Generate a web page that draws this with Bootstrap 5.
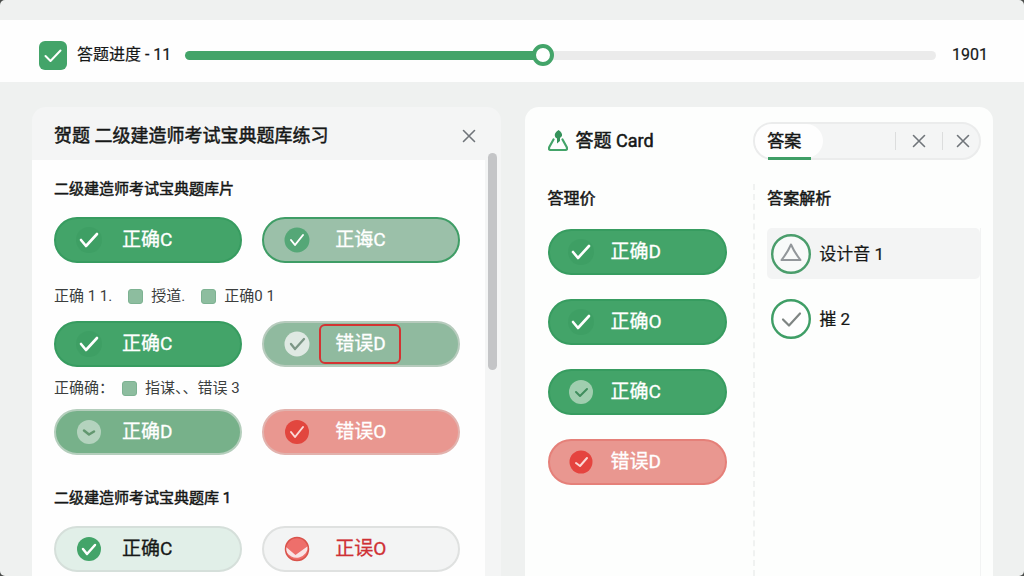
<!DOCTYPE html>
<html lang="zh-CN">
<head>
<meta charset="utf-8">
<meta name="viewport" content="width=device-width, initial-scale=1">
<title>二级建造师考试宝典题库练习</title>
<link href="https://cdn.jsdelivr.net/npm/bootstrap@5.3.0/dist/css/bootstrap.min.css" rel="stylesheet">
<style>
  :root { --green: #43a469; --ink: #161817; }
  html { background: #4a4d4b; }
  body { background: transparent; color: var(--ink); font-family: Roboto, "Noto Sans CJK SC", sans-serif; font-size: 15px; line-height: 22px; }
  .app { height: 100vh; overflow: hidden; background: #eff1f0; border-radius: 5px; padding-top: 20px; }
  .topbar { background: #fefefe; min-height: 62px; padding: 8px 36px 0 39px; }
  .topbar label { font-size: 16px; margin: 0 14px 0 10px; -webkit-text-stroke: 0.2px; }
  .topbar output { font-size: 16px; margin-left: 16px; -webkit-text-stroke: 0.2px; }
  .quiz-range { height: 24px; min-width: 0; }
  .quiz-range::-webkit-slider-runnable-track { height: 9px; border-radius: 5px; background: linear-gradient(90deg, var(--green) 48%, #ebebeb 48%); }
  .quiz-range::-webkit-slider-thumb { width: 22px; height: 22px; margin-top: -7px; background: #fff; border: 4px solid var(--green); box-shadow: none; }
  .panels { display: grid; grid-template-columns: minmax(0, 1fr) minmax(0, 1fr); padding: 25px 31px 0 32px; gap: 24px; min-height: 0; }
  .panel { min-width: 0; border-radius: 14px 14px 0 0; overflow: hidden; }
  .practice { background: #f4f5f5; }
  .practice-head { height: 53px; padding: 4px 0 0 22px; }
  h1, h2, h3 { margin: 0; color: var(--ink); font-weight: 400; -webkit-text-stroke: 0.5px; }
  h1, .sheet .card-name { font-size: 18px; line-height: 26px; }
  h3 { font-size: 15px; line-height: 22px; }
  .close-x { border: 0; background: none; padding: 0; width: 32px; height: 32px; color: #70757a; display: grid; place-items: center; }
  .questions { background: #fefefe; padding: 18px 24px 0 22px; }
  .answers { display: grid; grid-template-columns: 188fr 198fr; gap: 20px; }
  .questions h3 + .answers { margin-top: 17px; }
  .legend-line { color: #3c3f3e; line-height: 22px; white-space: pre; margin: 10px 0; }
  .legend-first { margin: 22px 0 14px; }
  .swatch { width: 15px; height: 15px; border-radius: 3px; background: #8dbd9f; border: 1px solid #7db292; }
  .rail { width: 16px; padding-top: 46px; }
  .rail-thumb { width: 9px; height: 217px; border-radius: 5px; background: #c4c5c7; margin-left: 3px; }
  .pill { height: 46px; border-radius: 23px; border: 2px solid #379c60; background: var(--green); color: #fff; font-size: 19px; line-height: 26px; padding: 0 0 0 20px; display: flex; align-items: center; width: 100%; -webkit-text-stroke: 0.3px; }
  .pill svg { width: 26px; height: 26px; flex: none; margin-right: 20px; }
  .answers .pill:nth-child(even) svg { margin-right: 25px; }
  .pill-dim { background: #9bc0a9; border-color: #3f9d66; }
  .pill-sage { background: #90ba9f; border-color: #b7cbbd; }
  .pill-mid { background: #77b18a; border-color: #b4cebc; }
  .pill-red { background: #e99790; border-color: #e2b2ad; }
  .pill-card-red { background: #e99790; border-color: #e58079; }
  .pill-mint { background: #e1efe8; border-color: #d5dfda; color: var(--ink); }
  .pill-plain { background: #f3f4f4; border-color: #dfe1e0; color: #cf3034; }
  .flag { border: 2px solid #d33332; border-radius: 6px; padding: 5px 13px 5px 14px; margin-left: -16px; }
  .sheet { background: #fdfefd; padding: 15px 12px 0 23px; }
  .split { display: grid; grid-template-columns: minmax(0, 206fr) minmax(0, 228fr); }
  .tabs-box { height: 38px; border: 2px solid #ebecec; border-radius: 19px; background: #f4f5f5; }
  .tab-on { position: relative; height: 34px; width: 68px; border: 0; border-radius: 17px; background: #fefefe; padding: 0 0 0 12px; text-align: left; font-size: 17px; color: var(--ink); -webkit-text-stroke: 0.5px; }
  .tab-on::after { content: ""; position: absolute; left: 13px; bottom: -2px; width: 43px; height: 3px; background: #3f9e66; }
  .bar-sep { width: 1px; height: 18px; background: #dcdddd; }
  .sheet h2 { font-size: 16px; line-height: 22px; }
  .sheet-pills { padding-right: 26px; gap: 24px; margin-top: 19px; }
  .sheet-pills .pill { padding-left: 18px; }
  .sheet-pills .pill svg { margin-right: 17px; }
  .analysis { border-left: 2px dashed #f0f2f1; padding: 4px 0 0 12px; }
  .entries { border-right: 1px solid #f2f3f3; margin-top: 18px; gap: 14px; }
  .entry { border: 0; background: none; height: 51px; padding: 0 0 0 4px; gap: 8px; font-size: 17px; color: var(--ink); text-align: left; border-radius: 5px; -webkit-text-stroke: 0.2px; }
  .entry svg { width: 40px; height: 40px; flex: none; }
  .entry-on { background: #f3f4f4; }
</style>
</head>
<body>
<svg class="d-none" aria-hidden="true">
  <symbol id="tick" viewBox="0 0 26 26"><circle cx="13" cy="13" r="13" fill="#3b9b61" opacity=".55"/><path d="M5 13l5 6L21 7" fill="none" stroke="#fff" stroke-width="2.600" stroke-linecap="round" stroke-linejoin="round"/></symbol>
  <symbol id="x" viewBox="0 0 14 14"><path d="M1.500 1.500l11 11M12.500 1.500l-11 11" fill="none" stroke="currentColor" stroke-width="1.600" stroke-linecap="round"/></symbol>
</svg>
<div class="app d-flex flex-column">
  <header class="topbar d-flex align-items-center">
    <svg class="flex-shrink-0" width="28" height="29" viewBox="0 0 28 29"><rect width="28" height="29" rx="6" fill="#43a469"/><path d="M6.500 15l5 5L21.500 9.500" fill="none" stroke="#fff" stroke-width="2" stroke-linecap="round" stroke-linejoin="round"/></svg>
    <label for="progress" class="text-nowrap">答题进度 - 11</label>
    <input type="range" class="form-range quiz-range flex-fill" id="progress" min="0" max="1000" value="476">
    <output for="progress">1901</output>
  </header>

  <main class="panels flex-fill">
    <section class="panel practice d-flex">
      <div class="flex-fill d-flex flex-column">
        <div class="practice-head d-flex align-items-center justify-content-between">
          <h1>贺题 二级建造师考试宝典题库练习</h1>
          <button class="close-x" type="button" aria-label="关闭"><svg width="14" height="14"><use href="#x"/></svg></button>
        </div>
        <div class="questions flex-fill">
          <h3>二级建造师考试宝典题库片</h3>
          <div class="answers">
            <button type="button" class="pill"><svg><use href="#tick"/></svg>正确C</button>
            <button type="button" class="pill pill-dim"><svg viewBox="0 0 26 26"><circle cx="13" cy="13" r="12.500" fill="#55a777"/><path d="M7 13l4 5 8-10" fill="none" stroke="#fff" stroke-width="2" stroke-linecap="round" stroke-linejoin="round"/></svg>正诲C</button>
          </div>
          <div class="legend-line legend-first d-flex align-items-center"><span>正确 1 1.</span><span class="swatch ms-3 me-2"></span><span>授道.</span><span class="swatch ms-3 me-2"></span><span>正确0 1</span></div>
          <div class="answers">
            <button type="button" class="pill"><svg><use href="#tick"/></svg>正确C</button>
            <button type="button" class="pill pill-sage"><svg viewBox="0 0 26 26"><circle cx="13" cy="13" r="12.500" fill="#dfe9e3"/><path d="M7 13l4 5 9-10" fill="none" stroke="#7c9686" stroke-width="2.300" stroke-linecap="round" stroke-linejoin="round"/></svg><span class="flag">错误D</span></button>
          </div>
          <div class="legend-line d-flex align-items-center"><span>正确确：</span><span class="swatch ms-2 me-2"></span><span>指谋、、错误 3</span></div>
          <div class="answers">
            <button type="button" class="pill pill-mid"><svg viewBox="0 0 26 26"><circle cx="13" cy="13" r="12" fill="#b4d3be"/><path d="M8 11.500l5 4 5-3" fill="none" stroke="#62976f" stroke-width="2.500" stroke-linecap="round" stroke-linejoin="round"/></svg>正确D</button>
            <button type="button" class="pill pill-red"><svg viewBox="0 0 26 26"><circle cx="13" cy="13" r="12" fill="#e2463e"/><path d="M7 13l4 5 8-10" fill="none" stroke="#fbd9d6" stroke-width="2" stroke-linecap="round" stroke-linejoin="round"/></svg>错误O</button>
          </div>
          <h3 class="pt-3 mt-3">二级建造师考试宝典题库 1</h3>
          <div class="answers">
            <button type="button" class="pill pill-mint"><svg viewBox="0 0 26 26"><circle cx="13" cy="13" r="12" fill="#43a469"/><path d="M7 13l4 5 8-9" fill="none" stroke="#fff" stroke-width="2.500" stroke-linecap="round" stroke-linejoin="round"/></svg>正确C</button>
            <button type="button" class="pill pill-plain"><svg viewBox="0 0 26 26"><circle cx="13" cy="13" r="11.500" fill="#ee6f6b"/><path d="M2 11L11.500 19 24 10A11.500 11.500 0 0 1 2 15z" fill="#f9e4e5"/><circle cx="13" cy="13" r="11.500" fill="none" stroke="#d9534b" stroke-width="1.500"/></svg>正误O</button>
          </div>
        </div>
      </div>
      <div class="rail flex-shrink-0"><div class="rail-thumb"></div></div>
    </section>

    <section class="panel sheet d-flex flex-column">
      <div class="split align-items-center">
        <div class="d-flex align-items-center">
          <svg class="me-2" width="20" height="22" viewBox="0 0 20 22"><path d="M5.500 9.500L1.300 17q-1 3 1.200 3h15q2.200 0 1.200-3l-4.200-7.500" fill="none" stroke="#43a469" stroke-width="2.200" stroke-linejoin="round" stroke-linecap="round"/><path d="M10.500 0C7 2.500 6 4.500 7.500 7.500L9 8.500v5l3-2.500V8l2-2C14.500 3.500 13 1.500 10.500 0z" fill="#35925a"/></svg>
          <h2 class="card-name">答题 Card</h2>
        </div>
        <div class="tabs-box d-flex align-items-center">
          <button type="button" class="tab-on me-auto">答案</button>
          <span class="bar-sep me-2"></span>
          <button class="close-x w-auto px-2" type="button" aria-label="收起"><svg width="14" height="14"><use href="#x"/></svg></button>
          <span class="bar-sep ms-2 me-1"></span>
          <button class="close-x" type="button" aria-label="关闭"><svg width="14" height="14"><use href="#x"/></svg></button>
        </div>
      </div>
      <div class="split flex-fill pt-4">
        <div>
          <h2 class="pt-1">答理价</h2>
          <div class="sheet-pills d-flex flex-column">
            <button type="button" class="pill"><svg><use href="#tick"/></svg>正确D</button>
            <button type="button" class="pill"><svg><use href="#tick"/></svg>正确O</button>
            <button type="button" class="pill"><svg viewBox="0 0 26 26"><circle cx="13" cy="13" r="12" fill="#a0ceaf"/><path d="M8 13l4 4 7-7" fill="none" stroke="#3f8d5d" stroke-width="2" stroke-linecap="round" stroke-linejoin="round"/></svg>正确C</button>
            <button type="button" class="pill pill-card-red"><svg viewBox="0 0 26 26"><circle cx="13" cy="13" r="11.500" fill="#e5443f"/><path d="M8 14l4 3 7-8" fill="none" stroke="#fbd9d6" stroke-width="2" stroke-linecap="round" stroke-linejoin="round"/></svg>错误D</button>
          </div>
        </div>
        <div class="analysis d-flex flex-column">
          <h2>答案解析</h2>
          <div class="entries flex-fill d-flex flex-column">
            <button type="button" class="entry entry-on d-flex align-items-center"><svg viewBox="0 0 40 40"><circle cx="20" cy="20" r="18.800" fill="#f8faf9" stroke="#4a9d6b" stroke-width="2.400"/><path d="M20 10.500q-3.500 8-9.500 15.500h19q-6-7.500-9.500-15.500z" fill="none" stroke="#92979a" stroke-width="2" stroke-linejoin="round"/></svg>设计音 1</button>
            <button type="button" class="entry d-flex align-items-center"><svg viewBox="0 0 40 40"><circle cx="20" cy="20" r="18.800" fill="#fefefe" stroke="#3f9e66" stroke-width="2.400"/><path d="M12 20.500l6 6L29 14.500" fill="none" stroke="#7f8583" stroke-width="2.200" stroke-linecap="round" stroke-linejoin="round"/></svg>摧 2</button>
          </div>
        </div>
      </div>
    </section>
  </main>
</div>
<script src="https://cdn.jsdelivr.net/npm/bootstrap@5.3.0/dist/js/bootstrap.bundle.min.js"></script>
</body>
</html>
